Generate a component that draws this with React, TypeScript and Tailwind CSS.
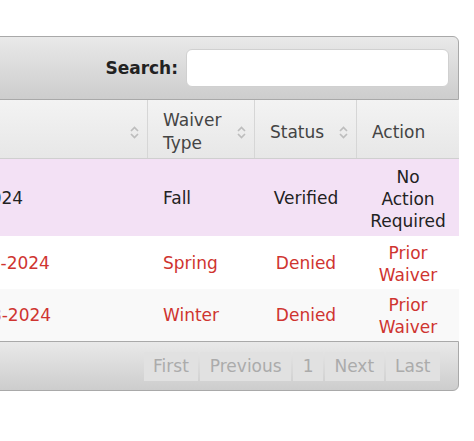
import React from 'react';

const font = { fontFamily: '"DejaVu Sans", Verdana, sans-serif' };

function SortIcon() {
  return (
    <svg width="9" height="13" viewBox="0 0 9 13" className="shrink-0">
      <path d="M1 5 L4.5 1.5 L8 5" fill="none" stroke="#bdbdbd" strokeWidth="1.7" />
      <path d="M1 8 L4.5 11.5 L8 8" fill="none" stroke="#bdbdbd" strokeWidth="1.7" />
    </svg>
  );
}

const rows = [
  { term: 'Fall 2023-2024', type: 'Fall', status: 'Verified', action: ['No', 'Action', 'Required'], bg: 'bg-[#f3e1f5] h-[77px]', text: 'text-[#222]' },
  { term: 'Spring 2023-2024', type: 'Spring', status: 'Denied', action: ['Prior', 'Waiver'], bg: 'bg-white h-[53px]', text: 'text-[#cf3430]' },
  { term: 'Winter 2023-2024', type: 'Winter', status: 'Denied', action: ['Prior', 'Waiver'], bg: 'bg-[#f9f9f9] h-[52px]', text: 'text-[#cf3430]' },
];

const pages = ['First', 'Previous', '1', 'Next', 'Last'];

export default function App() {
  return (
    <div className="w-[474px] h-[441px] bg-white overflow-hidden text-[17px] leading-[22px]" style={font}>
      <div className="ml-[-118px] w-[577px] mt-[36px]">
        {/* top toolbar */}
        <div className="h-[64px] border border-[#a9a9a9] rounded-tr-[6px] bg-gradient-to-b from-[#e9e9e9] to-[#cdcdcd] flex items-center justify-end pr-[9px]">
          <span className="font-bold text-[#222] mr-[8px]">Search:</span>
          <div className="w-[263px] h-[38px] bg-white rounded-[6px] border border-[#d0d0d0]" />
        </div>

        {/* header row */}
        <div className="grid grid-cols-[266px_107px_102px_102px] bg-gradient-to-b from-[#f3f3f3] to-[#e7e7e7] border-b border-[#cfcfcf] text-[#444] leading-[23px]">
          <div className="h-[58px] flex items-center justify-end pt-[6px] pr-[8px] border-r border-[#d6d6d6]">
            <SortIcon />
          </div>
          <div className="h-[58px] flex items-center justify-between pt-[6px] pl-[15px] pr-[8px] border-r border-[#d6d6d6]">
            <span>Waiver<br />Type</span>
            <SortIcon />
          </div>
          <div className="h-[58px] flex items-center justify-between pt-[6px] pl-[15px] pr-[8px] border-r border-[#d6d6d6]">
            <span>Status</span>
            <SortIcon />
          </div>
          <div className="h-[58px] flex items-center pt-[6px] pl-[15px]">
            <span>Action</span>
          </div>
        </div>

        {/* body rows */}
        {rows.map((r, i) => (
          <div key={i} className={`grid grid-cols-[266px_107px_102px_102px] ${r.bg} ${r.text}`}>
            <div className="flex items-center pl-[15px]">{r.term}</div>
            <div className="flex items-center pl-[15px]">{r.type}</div>
            <div className="flex items-center justify-center">{r.status}</div>
            <div className="flex flex-col items-center justify-center text-center pt-[2px]">
              {r.action.map((w) => (
                <span key={w}>{w}</span>
              ))}
            </div>
          </div>
        ))}

        {/* footer pagination */}
        <div className="h-[50px] border border-[#a9a9a9] rounded-br-[6px] bg-gradient-to-b from-[#e9e9e9] to-[#cdcdcd] flex items-center justify-end pr-[18px]">
          <div className="flex gap-[2px]">
            {pages.map((p) => (
              <span key={p} className="h-[29px] flex items-center px-[9.5px] bg-[#e1e1e1] text-[#ababab]">
                {p}
              </span>
            ))}
          </div>
        </div>
      </div>
    </div>
  );
}
